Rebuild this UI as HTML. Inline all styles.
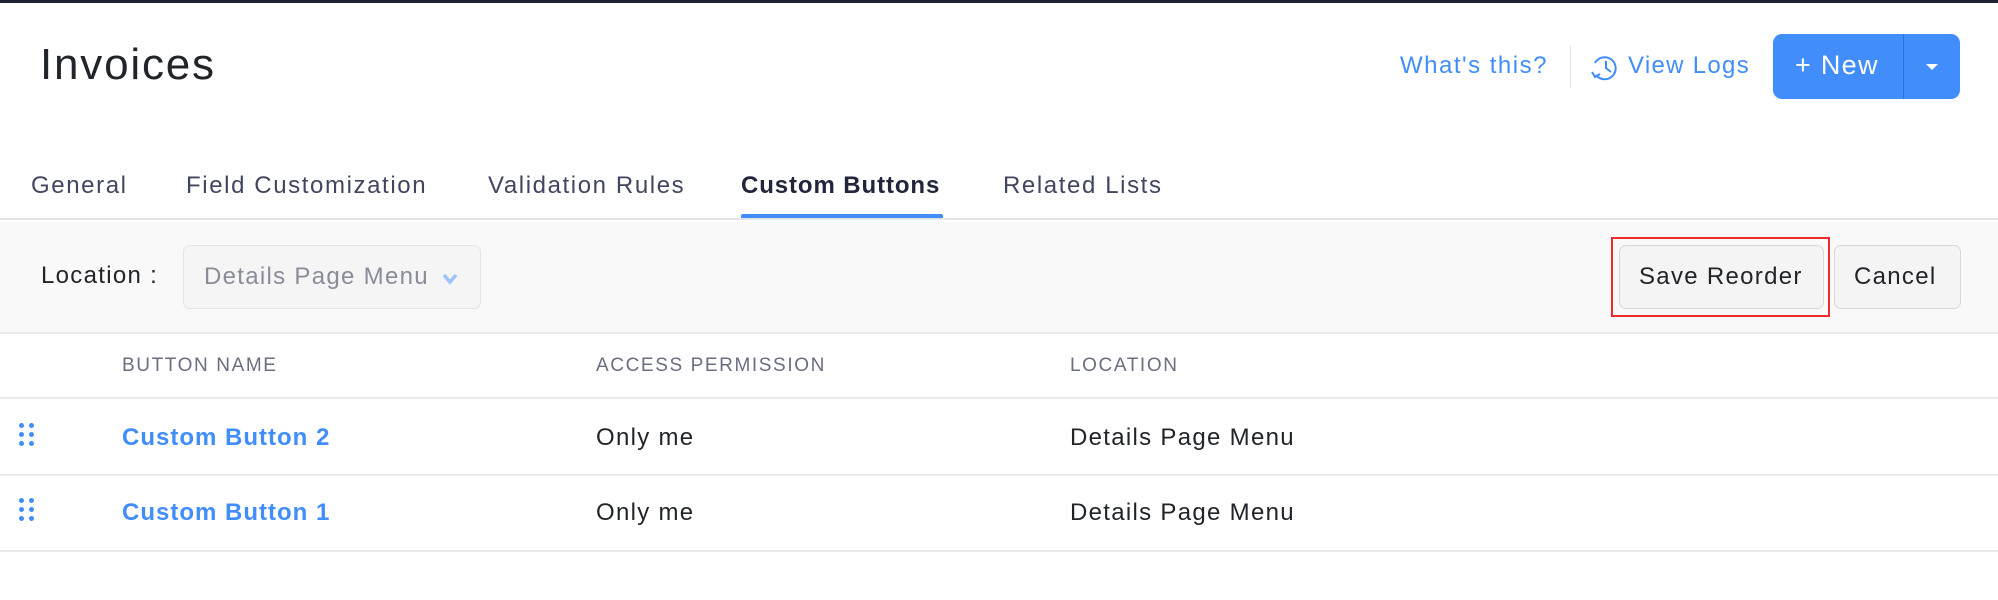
<!DOCTYPE html>
<html><head><meta charset="utf-8"><style>
*{margin:0;padding:0;box-sizing:border-box}
body{width:1998px;height:600px;background:#fff;font-family:"Liberation Sans",sans-serif;position:relative;overflow:hidden;color:#212529;letter-spacing:1.3px}
.a{position:absolute;white-space:nowrap}
.tab{top:172px;font-size:24px;color:#414660;letter-spacing:1.6px}
.hd{top:355px;font-size:19px;color:#6b6e80;letter-spacing:1.6px}
.cell{font-size:24px;color:#212529}
.lnk{font-size:24px;color:#408dfb;font-weight:bold;letter-spacing:1px}
.dots{position:absolute;width:16px;height:24px}
.dots i{position:absolute;width:5px;height:5px;border-radius:50%;background:#408dfb}
</style></head><body>
<div class="a" style="left:0;top:0;width:1998px;height:3px;background:#1f2233"></div>
<div class="a" style="left:40px;top:40px;font-size:44px;color:#212529;letter-spacing:1.8px">Invoices</div>

<div class="a" style="left:1400px;top:52px;font-size:24px;color:#408dfb;letter-spacing:1.5px">What's this?</div>
<div class="a" style="left:1570px;top:46px;width:1px;height:42px;background:#e0e0e6"></div>
<svg class="a" style="left:1591px;top:53px" width="28" height="30" viewBox="0 0 28 30"><path d="M5 22 A11 11 0 1 0 4 10" fill="none" stroke="#408dfb" stroke-width="2"/><path d="M1 19 L4 24 L9 21" fill="none" stroke="#408dfb" stroke-width="2"/><path d="M15 8 V15 L20 19" fill="none" stroke="#408dfb" stroke-width="2"/></svg>
<div class="a" style="left:1628px;top:52px;font-size:24px;color:#408dfb">View Logs</div>
<div class="a" style="left:1773px;top:34px;width:187px;height:65px;background:#408dfb;border-radius:9px"></div>
<div class="a" style="left:1903px;top:34px;width:1px;height:65px;background:#2f73d6"></div>
<div class="a" style="left:1795px;top:50px;font-size:27px;color:#fff">+ New</div>
<div class="a" style="left:1926px;top:64px;width:0;height:0;border-left:6px solid transparent;border-right:6px solid transparent;border-top:6px solid #fff"></div>

<div class="a tab" style="left:31px">General</div>
<div class="a tab" style="left:186px">Field Customization</div>
<div class="a tab" style="left:488px">Validation Rules</div>
<div class="a tab" style="left:741px;color:#21263c;font-weight:bold;letter-spacing:0.9px">Custom Buttons</div>
<div class="a tab" style="left:1003px">Related Lists</div>
<div class="a" style="left:741px;top:214px;width:202px;height:4px;background:#408dfb;border-radius:2px 2px 0 0"></div>
<div class="a" style="left:0;top:218px;width:1998px;height:2px;background:#e3e4e8"></div>

<div class="a" style="left:0;top:222px;width:1998px;height:111px;background:#f9f9f9"></div>
<div class="a" style="left:0;top:332px;width:1998px;height:2px;background:#ebebef"></div>
<div class="a" style="left:41px;top:262px;font-size:24px;color:#212529">Location :</div>
<div class="a" style="left:183px;top:245px;width:298px;height:64px;border:1px solid #e4e4e8;border-radius:7px;background:#f5f5f5"></div>
<div class="a" style="left:204px;top:263px;font-size:24px;color:#8a8c99">Details Page Menu</div>
<svg class="a" style="left:441px;top:272px" width="18" height="14" viewBox="0 0 18 14"><path d="M3 3 L9 10 L15 3" fill="none" stroke="#9cc3fb" stroke-width="3.5"/></svg>

<div class="a" style="left:1611px;top:237px;width:219px;height:80px;border:2px solid #ee2b2b"></div>
<div class="a" style="left:1619px;top:245px;width:205px;height:64px;border:1px solid #d8d8dc;border-radius:7px;background:#f4f4f4"></div>
<div class="a" style="left:1639px;top:263px;font-size:24px;color:#212529">Save Reorder</div>
<div class="a" style="left:1834px;top:245px;width:127px;height:64px;border:1px solid #d8d8dc;border-radius:7px;background:#f4f4f4"></div>
<div class="a" style="left:1854px;top:263px;font-size:24px;color:#212529">Cancel</div>

<div class="a hd" style="left:122px">BUTTON NAME</div>
<div class="a hd" style="left:596px">ACCESS PERMISSION</div>
<div class="a hd" style="left:1070px">LOCATION</div>
<div class="a" style="left:0;top:397px;width:1998px;height:2px;background:#ebebef"></div>

<div class="dots" style="left:19px;top:423px"><i style="left:0;top:0"></i><i style="left:10px;top:0"></i><i style="left:0;top:9px"></i><i style="left:10px;top:9px"></i><i style="left:0;top:18px"></i><i style="left:10px;top:18px"></i></div>
<div class="a lnk" style="left:122px;top:424px">Custom Button 2</div>
<div class="a cell" style="left:596px;top:424px">Only me</div>
<div class="a cell" style="left:1070px;top:424px">Details Page Menu</div>
<div class="a" style="left:0;top:474px;width:1998px;height:2px;background:#ebebef"></div>

<div class="dots" style="left:19px;top:498px"><i style="left:0;top:0"></i><i style="left:10px;top:0"></i><i style="left:0;top:9px"></i><i style="left:10px;top:9px"></i><i style="left:0;top:18px"></i><i style="left:10px;top:18px"></i></div>
<div class="a lnk" style="left:122px;top:499px">Custom Button 1</div>
<div class="a cell" style="left:596px;top:499px">Only me</div>
<div class="a cell" style="left:1070px;top:499px">Details Page Menu</div>
<div class="a" style="left:0;top:550px;width:1998px;height:2px;background:#ebebef"></div>
</body></html>
